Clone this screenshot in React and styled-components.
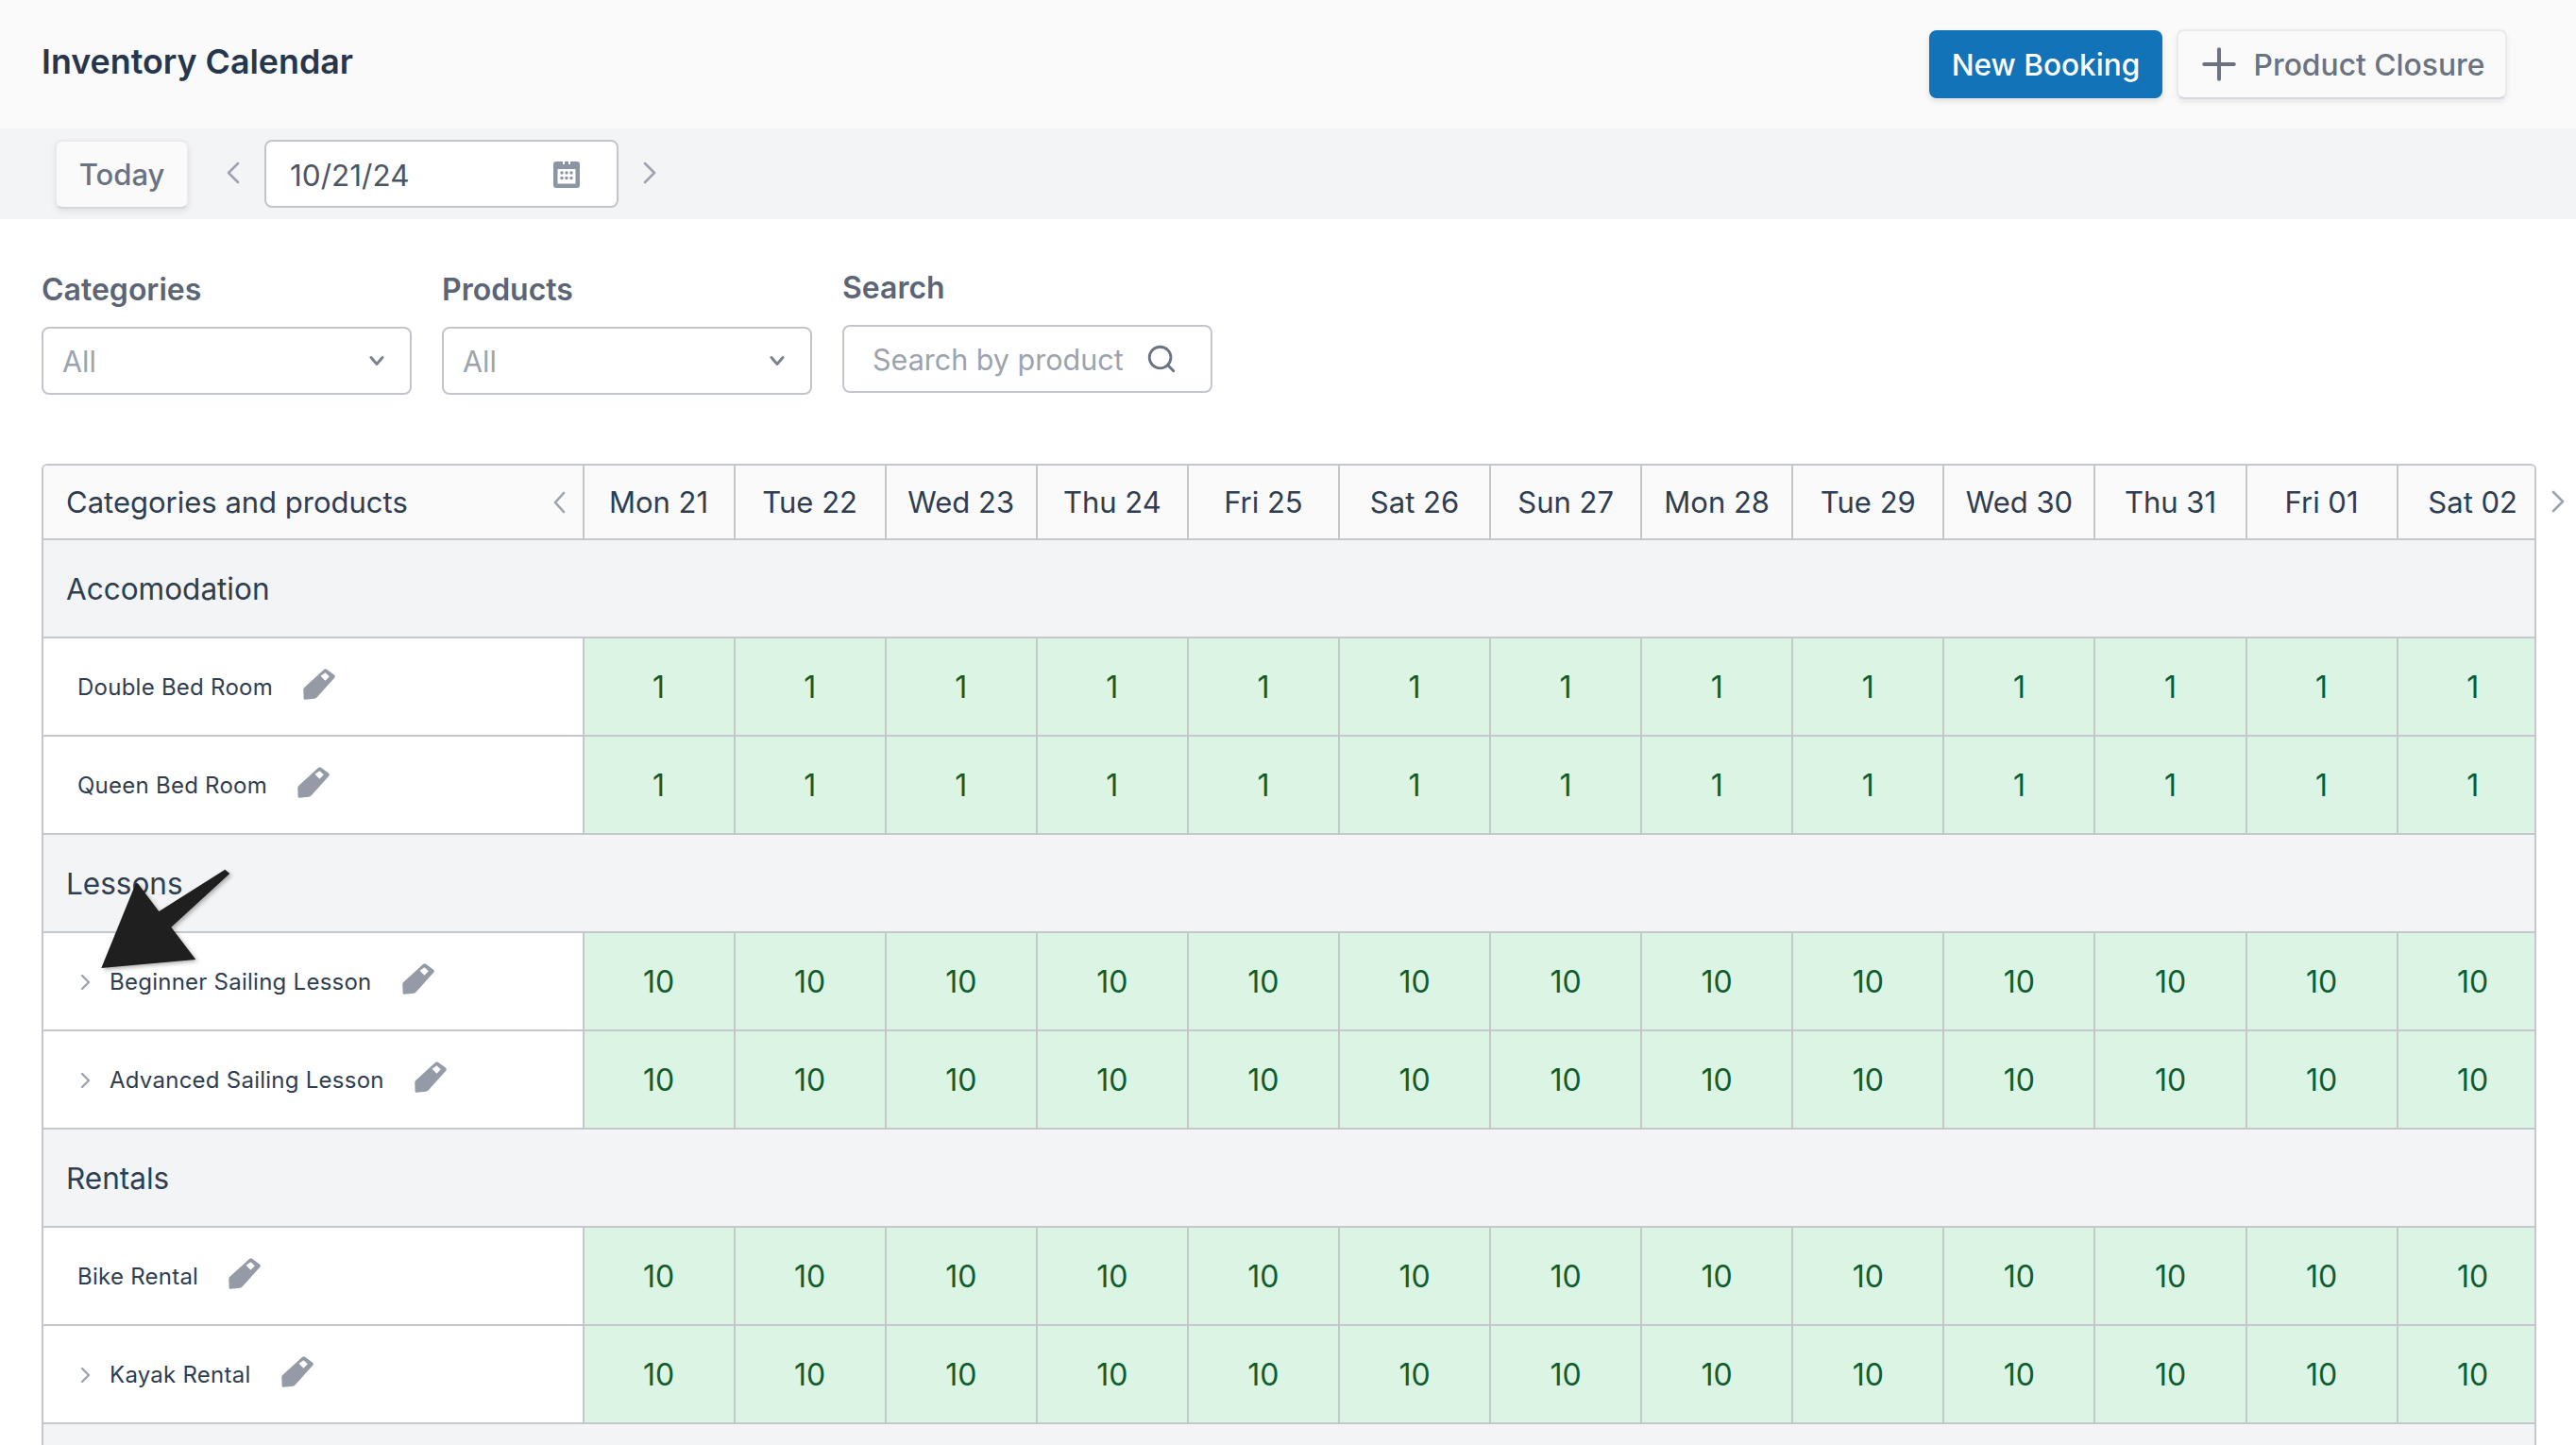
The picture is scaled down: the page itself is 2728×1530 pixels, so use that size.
import React from "react";
import styled, { createGlobalStyle } from "styled-components";
import { Plus, Search } from "lucide-react";

const GlobalStyle = createGlobalStyle`
  html, body {
    margin: 0;
    padding: 0;
    background: #fff;
  }
  body {
    font-family: Inter, "Liberation Sans", sans-serif;
    color: #2f3d50;
  }
  * {
    box-sizing: border-box;
  }
`;

const Page = styled.div`
  position: relative;
  width: 2728px;
  height: 1530px;
  overflow: hidden;
`;

const Header = styled.header`
  height: 136px;
  background: #fafafb;
  display: flex;
  align-items: center;
  justify-content: space-between;
  padding: 0 73px 0 44px;
`;

const Title = styled.h1`
  margin: -6px 0 0;
  font-size: 35.8px;
  font-weight: 600;
  color: #25364d;
`;

const Actions = styled.div`
  display: flex;
  align-items: center;
  gap: 15px;
`;

const PrimaryButton = styled.button`
  width: 247px;
  height: 72px;
  border: none;
  border-radius: 8px;
  background: #1273b9;
  color: #fff;
  font: 500 31.6px Inter, sans-serif;
  box-shadow: 0 3px 6px rgba(0, 0, 0, 0.12);
`;

const SecondaryButton = styled.button`
  display: flex;
  align-items: center;
  justify-content: center;
  gap: 10px;
  width: ${(props) => props.$width}px;
  height: ${(props) => props.$height}px;
  padding: 0 ${(props) => props.$trail || 0}px 0 0;
  border: 2px solid #e9e9ee;
  border-bottom-color: #d6d7de;
  border-radius: 8px;
  background: #fafafb;
  color: #6b7280;
  font: 500 ${(props) => props.$size}px Inter, sans-serif;
  box-shadow: 0 3px 6px rgba(0, 0, 0, 0.08);
`;

const Toolbar = styled.div`
  height: 96px;
  background: #f3f4f6;
  display: flex;
  align-items: center;
  padding-left: 58px;
`;

const ChevronButton = styled.span`
  display: flex;
  justify-content: center;
  width: ${(props) => props.$width}px;
  padding-left: ${(props) => props.$pad || 0}px;
  margin-top: -2px;
  color: #9ca3af;
`;

const DateField = styled.div`
  display: flex;
  align-items: center;
  justify-content: space-between;
  width: 375px;
  height: 72px;
  padding: 0 39px 0 25px;
  border: 2px solid #c2c5cc;
  border-radius: 8px;
  background: #fff;
  color: #4b5563;
  font-size: 31.5px;
`;

const DateValue = styled.span`
  margin-top: 3px;
`;

const Filters = styled.section`
  display: flex;
  align-items: flex-start;
  gap: 32.5px;
  padding: 53px 0 0 44px;
  height: 259px;
`;

const FilterGroup = styled.div`
  width: 391.5px;
  margin-top: ${(props) => (props.$raised ? "-2px" : "0")};
`;

const FilterLabel = styled.label`
  display: block;
  height: 61px;
  line-height: 44px;
  font-size: 32px;
  font-weight: 600;
  color: #5b6576;
`;

const SelectBox = styled.div`
  display: flex;
  align-items: center;
  justify-content: space-between;
  height: 72px;
  padding: 0 26px 0 20px;
  border: 2px solid #c2c5cc;
  border-radius: 8px;
  color: #9ca3af;
  font-size: 30.5px;
`;

const SearchBox = styled(SelectBox)`
  padding: 0 35px 0 30px;
`;

const TableArea = styled.div`
  display: flex;
  align-items: flex-start;
  padding-left: 44px;
`;

const Table = styled.div`
  width: 2642px;
  border: 2px solid #c4c8cd;
  border-bottom: none;
  border-radius: 6px 6px 0 0;
  overflow: hidden;
`;

const Row = styled.div`
  display: grid;
  grid-template-columns: 572.5px repeat(13, 160.1px);
  height: ${(props) => props.$height}px;
  border-bottom: 2px solid #c4c8cd;
`;

const HeaderCell = styled.div`
  display: flex;
  align-items: center;
  justify-content: ${(props) => (props.$first ? "space-between" : "center")};
  padding: ${(props) => (props.$first ? "0 18px 0 24px" : "0")};
  background: #fafafb;
  border-right: 2px solid #c4c8cd;
  font-size: 31px;
  color: #2f3d50;
  white-space: nowrap;
`;

const HeaderChevron = styled.span`
  display: flex;
  color: #9ca3af;
`;

const CategoryRow = styled.div`
  display: flex;
  align-items: center;
  height: 104px;
  padding: 1px 0 0 24px;
  background: #f3f4f6;
  border-bottom: 2px solid #c4c8cd;
  font-size: 31.5px;
  color: #2f3d50;
`;

const ProductCell = styled.div`
  display: flex;
  align-items: center;
  padding-left: 36px;
  background: #fff;
  border-right: 2px solid #c4c8cd;
  font-size: 24px;
  letter-spacing: 0.25px;
  color: #2f3d50;
`;

const Expander = styled.span`
  display: flex;
  width: 31px;
  margin: 2px 0 0 3px;
  color: #9ca3af;
`;

const EditIcon = styled.span`
  display: flex;
  margin: -6px 0 0 32px;
`;

const CountCell = styled.div`
  display: flex;
  align-items: center;
  justify-content: center;
  background: #dcf4e4;
  border-right: 2px solid #c4c8cd;
  font-size: 32px;
  color: #0f5c2e;
`;

const SideChevron = styled.span`
  display: flex;
  align-items: center;
  height: 79px;
  padding-left: 16px;
  color: #9ca3af;
`;

const Pointer = styled.svg`
  position: absolute;
  left: 100px;
  top: 914px;
  filter: drop-shadow(2px 2px 2px rgba(0, 0, 0, 0.3));
`;

const Chevron = ({ dir = "right", w = 14, h = 24, sw = 2.6 }) => (
  <svg width={w} height={h} viewBox={`0 0 ${w} ${h}`} fill="none" stroke="currentColor" strokeWidth={sw} strokeLinecap="round" strokeLinejoin="round">
    {dir === "right" ? (
      <path d={`M2 2 L${w - 2} ${h / 2} L2 ${h - 2}`} />
    ) : (
      <path d={`M${w - 2} 2 L2 ${h / 2} L${w - 2} ${h - 2}`} />
    )}
  </svg>
);

const CaretDown = () => (
  <svg width="18" height="12" viewBox="0 0 18 12" fill="none" stroke="#7b8390" strokeWidth="3" strokeLinecap="round" strokeLinejoin="round">
    <path d="M3 2.5 L9 9.5 L15 2.5" />
  </svg>
);

const CalendarIcon = () => (
  <svg width="28" height="29" viewBox="0 0 28 29">
    <path
      fill="#8b95a3"
      fillRule="evenodd"
      d="M3 1h7v3h2V1h4v3h2V1h7a3 3 0 0 1 3 3v22a3 3 0 0 1-3 3H3a3 3 0 0 1-3-3V4a3 3 0 0 1 3-3zM4.5 9v15.5h19V9h-19z"
    />
    <g fill="#8b95a3">
      {[13, 18.5].map((y) =>
        [9, 14, 19].map((x) => <circle key={`${x}-${y}`} cx={x} cy={y} r="1.7" />)
      )}
    </g>
  </svg>
);

const PencilIcon = () => (
  <svg width="34" height="33" viewBox="0 0 34 33">
    <path
      fill="#949ba6"
      fillRule="evenodd"
      d="M22 1 Q23.5 -0.3 25 0.8 L32.8 6.5 Q34.5 8 33.2 9.8 L14.5 30.5 Q13.5 31.6 12 31.8 L2 32.8 Q0.6 32.8 0.6 31.4 L0.3 22 Q0.3 20.8 1.2 20 Z M18.5 7.7 L23.5 4.3 L27.8 8.3 L23.5 12.7 Z"
    />
  </svg>
);

const days = ["Mon 21", "Tue 22", "Wed 23", "Thu 24", "Fri 25", "Sat 26", "Sun 27", "Mon 28", "Tue 29", "Wed 30", "Thu 31", "Fri 01", "Sat 02"];

const groups = [
  {
    name: "Accomodation",
    products: [
      { name: "Double Bed Room", count: 1 },
      { name: "Queen Bed Room", count: 1 },
    ],
  },
  {
    name: "Lessons",
    products: [
      { name: "Beginner Sailing Lesson", count: 10, expandable: true },
      { name: "Advanced Sailing Lesson", count: 10, expandable: true },
    ],
  },
  {
    name: "Rentals",
    products: [
      { name: "Bike Rental", count: 10 },
      { name: "Kayak Rental", count: 10, expandable: true },
    ],
  },
];

const App = () => (
  <Page>
    <GlobalStyle />
    <Header>
      <Title>Inventory Calendar</Title>
      <Actions>
        <PrimaryButton>New Booking</PrimaryButton>
        <SecondaryButton $width={350} $height={74} $size={31.8} $trail={6}>
          <Plus size={54} strokeWidth={1.8} />
          Product Closure
        </SecondaryButton>
      </Actions>
    </Header>

    <Toolbar>
      <SecondaryButton $width={142} $height={73} $size={31}>Today</SecondaryButton>
      <ChevronButton $width={80} $pad={13}>
        <Chevron dir="left" />
      </ChevronButton>
      <DateField>
        <DateValue>10/21/24</DateValue>
        <CalendarIcon />
      </DateField>
      <ChevronButton $width={66}>
        <Chevron />
      </ChevronButton>
    </Toolbar>

    <Filters>
      <FilterGroup>
        <FilterLabel>Categories</FilterLabel>
        <SelectBox>
          All
          <CaretDown />
        </SelectBox>
      </FilterGroup>
      <FilterGroup>
        <FilterLabel>Products</FilterLabel>
        <SelectBox>
          All
          <CaretDown />
        </SelectBox>
      </FilterGroup>
      <FilterGroup $raised>
        <FilterLabel>Search</FilterLabel>
        <SearchBox>
          Search by product
          <Search size={34} strokeWidth={2} color="#6b7280" />
        </SearchBox>
      </FilterGroup>
    </Filters>

    <TableArea>
      <Table>
        <Row $height={79}>
          <HeaderCell $first>
            Categories and products
            <HeaderChevron>
              <Chevron dir="left" w={13} h={24} />
            </HeaderChevron>
          </HeaderCell>
          {days.map((day) => (
            <HeaderCell key={day}>{day}</HeaderCell>
          ))}
        </Row>
        {groups.map((group) => (
          <React.Fragment key={group.name}>
            <CategoryRow>{group.name}</CategoryRow>
            {group.products.map((product) => (
              <Row key={product.name} $height={104}>
                <ProductCell>
                  {product.expandable && (
                    <Expander>
                      <Chevron w={11} h={18} sw={2.4} />
                    </Expander>
                  )}
                  {product.name}
                  <EditIcon>
                    <PencilIcon />
                  </EditIcon>
                </ProductCell>
                {days.map((day) => (
                  <CountCell key={day}>{product.count}</CountCell>
                ))}
              </Row>
            ))}
          </React.Fragment>
        ))}
        <CategoryRow />
      </Table>
      <SideChevron>
        <Chevron w={14} h={24} />
      </SideChevron>
    </TableArea>

    <Pointer width="150" height="120" viewBox="100 914 150 120">
      <path fill="#1f1f1f" d="M107.3 1025 L143.5 936 Q145 934 146.5 936 L168.3 965 L238.3 920.7 L243.3 925 L181.3 981.7 L207.3 1016 Z" />
    </Pointer>
  </Page>
);

export default App;
